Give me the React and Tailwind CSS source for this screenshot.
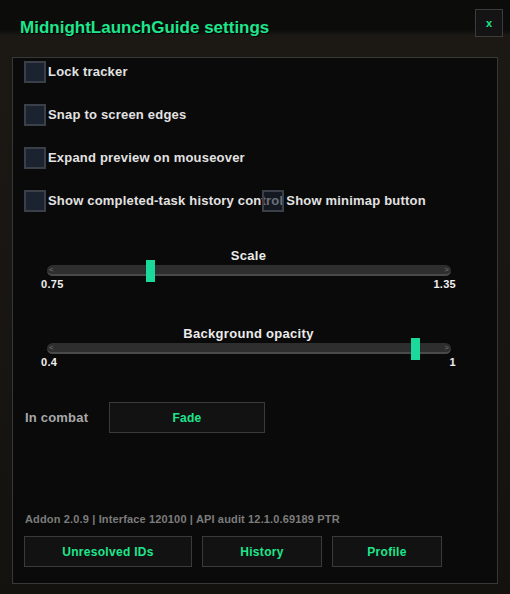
import React from 'react';

const font = { fontFamily: '"Liberation Sans", Arial, sans-serif' };

const Checkbox = ({ className = '' }) => (
  <span className={`block w-[22px] h-[22px] shrink-0 bg-[#1b2230] border-2 border-[#3b4048] ${className}`} />
);

const Slider = ({ label, min, max, pos }) => (
  <div className="flex flex-col pl-[17px] pr-[30px]">
    <div className="text-center text-[13px] font-bold text-[#ececec] leading-4 tracking-[0.3px]">{label}</div>
    <div className="relative ml-[6px] mr-[5px] mt-[1px] h-[11px] rounded-full bg-[#2e2e2e] border-b-2 border-[#4a4a4a]">
      <span className="absolute left-[2px] top-[1px] text-[8px] leading-none text-[#777]">&lt;</span>
      <span className="absolute right-[2px] top-[1px] text-[8px] leading-none text-[#777]">&gt;</span>
      <span
        className="absolute top-[-5px] w-[9px] h-[22px] bg-[#1bd99a]"
        style={{ left: pos }}
      />
    </div>
    <div className="flex justify-between mt-[0px] text-[11px] font-bold text-[#f0f0f0] leading-4 tracking-[0.3px]">
      <span>{min}</span>
      <span>{max}</span>
    </div>
  </div>
);

const Button = ({ children, className }) => (
  <button className={`h-[31px] bg-[#121212] border border-[#3a3a3a] text-[12px] font-bold text-[#1ee68c] tracking-[0.3px] ${className}`}>
    {children}
  </button>
);

export default function App() {
  return (
    <div
      className="w-[510px] h-[594px] bg-gradient-to-b from-[#0c0c0b] from-[5%] via-[#1c1915] via-[6%] to-[#14120f] flex flex-col px-[12px] pb-[10px]"
      style={font}
    >
      <div className="h-[57px] flex items-start justify-between pl-[8px]">
        <h1 className="mt-[15px] text-[17px] font-bold text-[#1ee68c] [text-shadow:1px_1px_0_#000]">
          MidnightLaunchGuide settings
        </h1>
        <button className="mt-[9px] mr-[-5px] w-[28px] h-[28px] bg-[#141414] border border-[#3c3c3c] text-[11px] font-bold text-[#1ee68c] leading-none">
          x
        </button>
      </div>

      <div className="flex-1 bg-[#0a0a0a] border border-[#383838] flex flex-col pt-[3px] pl-[11px] pr-[11px]">
        <div className="flex flex-col gap-[21px] text-[13px] font-bold text-[#e2e2e2] tracking-[0.2px]">
          <label className="flex items-center gap-[2px]"><Checkbox />Lock tracker</label>
          <label className="flex items-center gap-[2px]"><Checkbox />Snap to screen edges</label>
          <label className="flex items-center gap-[2px]"><Checkbox />Expand preview on mouseover</label>
          <div className="flex items-center">
            <label className="flex items-center gap-[2px]"><Checkbox />Show completed-task history control</label>
            <label className="flex items-center gap-[2px] ml-[-21px] relative">
              <Checkbox className="bg-[#1b2230]/60" />
              Show minimap button
            </label>
          </div>
        </div>

        <div className="mt-[36px]">
          <Slider label="Scale" min="0.75" max="1.35" pos="99px" />
        </div>
        <div className="mt-[34px]">
          <Slider label="Background opacity" min="0.4" max="1" pos="364px" />
        </div>

        <div className="mt-[32px] flex items-center">
          <span className="w-[85px] pl-[1px] text-[13px] font-bold text-[#a8a8a8] tracking-[0.2px]">In combat</span>
          <Button className="w-[156px] h-[29px] text-[11px]">Fade</Button>
        </div>

        <div className="mt-auto text-[11px] font-bold text-[#7c7c7c] pl-[1px] tracking-[0.15px]">
          Addon 2.0.9 | Interface 120100 | API audit 12.1.0.69189 PTR
        </div>
        <div className="mt-[9px] mb-[16px] flex gap-[10px]">
          <Button className="w-[168px]">Unresolved IDs</Button>
          <Button className="w-[120px]">History</Button>
          <Button className="w-[110px]">Profile</Button>
        </div>
      </div>
    </div>
  );
}
